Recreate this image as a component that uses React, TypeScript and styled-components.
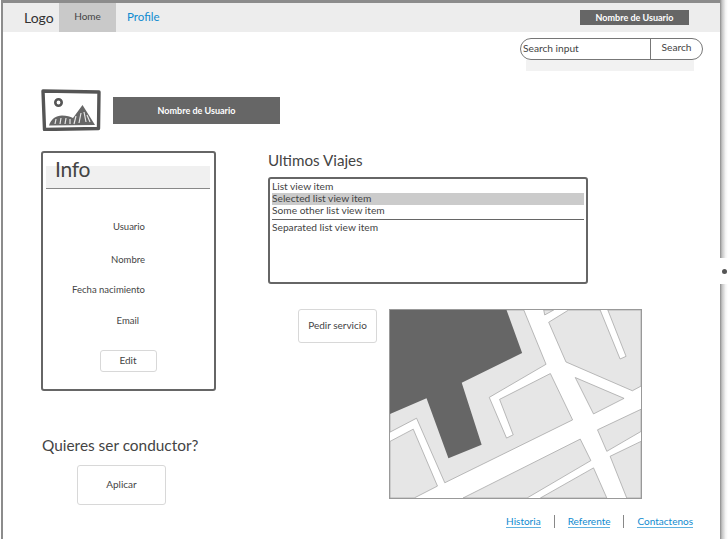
import React from "react";
import styled, { createGlobalStyle } from "styled-components";

const Global = createGlobalStyle`
  html, body { margin: 0; padding: 0; background: #fff; overflow: hidden; }
  body { font-family: "Lato", "Open Sans", sans-serif; color: #444; }
  * { box-sizing: border-box; }
`;

const Frame = styled.div`
  position: relative;
  margin-left: 1px;
  width: 719px;
  height: 539px;
  border: solid #8c8c8c;
  border-width: 3px 0 0 2px;
  &::after {
    content: "";
    position: absolute;
    top: -3px;
    bottom: 0;
    right: -8px;
    width: 8px;
    background: linear-gradient(to right, #8a8a8a 0, #c4c4c4 25%, #f4f4f4 70%, #fff 100%);
  }
`;

const Header = styled.header`
  display: flex;
  align-items: center;
  height: 29px;
  background: #ededed;
`;
const Logo = styled.div`
  width: 35px;
  margin-left: 21px;
  padding-bottom: 1px;
  font-size: 14px;
  color: #333;
`;
const HomeTab = styled.div`
  width: 57px;
  height: 29px;
  padding-bottom: 3px;
  background: #c9c9c9;
  display: flex;
  align-items: center;
  justify-content: center;
  font-size: 10px;
  color: #444;
`;
const ProfileLink = styled.a`
  margin-left: 11px;
  padding-bottom: 3px;
  font-size: 11.5px;
  color: #0f8bd0;
`;
const UserChip = styled.div`
  margin-left: auto;
  margin-right: 31px;
  width: 109px;
  height: 15px;
  padding-bottom: 1px;
  background: #666;
  color: #fff;
  font-size: 9px;
  font-weight: 700;
  display: flex;
  align-items: center;
  justify-content: center;
`;

const SearchArea = styled.div`
  display: flex;
  flex-direction: column;
  align-items: flex-end;
  margin-top: 6px;
  padding-right: 17px;
`;
const SearchBox = styled.div`
  display: flex;
  width: 183px;
  height: 22px;
  border: 1px solid #777;
  border-radius: 11px;
  font-size: 10.2px;
  color: #444;
`;
const SearchInput = styled.div`
  flex: 1;
  padding-left: 2px;
  line-height: 19px;
  border-right: 1px solid #777;
`;
const SearchButton = styled.div`
  width: 51px;
  text-align: center;
  line-height: 17px;
`;
const SearchShade = styled.div`
  width: 168px;
  height: 11px;
  margin-right: 9px;
  background: #f2f2f2;
`;

const ProfileRow = styled.section`
  display: flex;
  align-items: center;
  gap: 12px;
  margin-top: 18px;
  padding-left: 38px;
  height: 42px;
`;
const NameBar = styled.div`
  width: 167px;
  height: 27px;
  background: #666;
  color: #fff;
  font-size: 9px;
  font-weight: 700;
  display: flex;
  align-items: center;
  justify-content: center;
`;

const Main = styled.main`
  display: grid;
  grid-template-columns: 175px 1fr;
  column-gap: 52px;
  margin-top: 20px;
  padding-left: 38px;
`;
const LeftColumn = styled.div`
  display: flex;
  flex-direction: column;
`;
const RightColumn = styled.div`
  display: flex;
  flex-direction: column;
`;

const InfoPanel = styled.section`
  height: 240px;
  border: 2px solid #666;
  border-radius: 3px;
  display: flex;
  flex-direction: column;
`;
const InfoBand = styled.div`
  height: 23px;
  margin: 13px 4px 0 3px;
  background: #f0f0f0;
  border-bottom: 1px solid #888;
`;
const InfoTitle = styled.h2`
  margin: -12px 0 0 9px;
  font-size: 21px;
  line-height: 30px;
  font-weight: 400;
  letter-spacing: -0.3px;
  color: #444;
`;
const InfoFields = styled.div`
  display: grid;
  grid-template-rows: 33px 30px 31px 31px;
  margin-top: 30px;
  padding-right: 69px;
  text-align: right;
  font-size: 9.5px;
  line-height: 16px;
  color: #444;
`;
const InfoField = styled.div<{ $inset?: number }>`
  padding-right: ${(p) => p.$inset ?? 0}px;
`;
const GhostButton = styled.div<{ $w: number; $h: number }>`
  width: ${(p) => p.$w}px;
  height: ${(p) => p.$h}px;
  padding-bottom: 2px;
  border: 1px solid #d8d8d8;
  border-radius: 3px;
  display: flex;
  align-items: center;
  justify-content: center;
  font-size: 10px;
  color: #444;
  flex: none;
`;
const EditSlot = styled.div`
  display: flex;
  justify-content: center;
  margin-top: 6px;
  padding-right: 1px;
`;

const Question = styled.h3`
  margin: 45px 0 0 1px;
  font-size: 15.4px;
  line-height: 19px;
  font-weight: 400;
  white-space: nowrap;
  color: #444;
`;
const ApplySlot = styled.div`
  margin: 10px 0 0 36px;
`;

const TripsTitle = styled.h2`
  margin: 0;
  height: 26px;
  font-size: 15.2px;
  line-height: 19px;
  font-weight: 400;
  color: #444;
`;
const TripList = styled.ul`
  list-style: none;
  margin: 0;
  padding: 2px 2px 0 2px;
  width: 320px;
  height: 107px;
  border: 2px solid #666;
  border-radius: 3px;
  font-size: 10.2px;
  color: #444;
`;
const TripItem = styled.li<{ $selected?: boolean; $separated?: boolean }>`
  height: 12px;
  line-height: 10px;
  background: ${(p) => (p.$selected ? "#cbcbcb" : "transparent")};
  ${(p) => p.$separated && "margin-top: 2px; border-top: 1px solid #666; height: 16px; line-height: 14px;"}
`;
const ServiceRow = styled.div`
  display: flex;
  gap: 12px;
  margin-top: 25px;
  padding-left: 30px;
`;
const MapBox = styled.svg`
  display: block;
  flex: none;
  width: 253px;
  height: 190px;
  border: 1px solid #999;
`;

const Footer = styled.footer`
  display: flex;
  justify-content: flex-end;
  align-items: center;
  gap: 12px;
  margin-top: 9px;
  padding-right: 27px;
  height: 15px;
`;
const FooterLink = styled.a`
  font-size: 10px;
  line-height: 12px;
  color: #0f8bd0;
  border-bottom: 1px solid #5fb2e0;
`;
const FooterRule = styled.span`
  width: 1px;
  height: 13px;
  margin: 0 1px;
  background: #888;
`;

const SideTab = styled.div`
  position: absolute;
  z-index: 1;
  top: 255px;
  right: -8px;
  width: 8px;
  height: 26px;
  background: #fff;
  display: flex;
  align-items: center;
  justify-content: center;
`;
const SideDot = styled.span`
  width: 5px;
  height: 5px;
  border-radius: 50%;
  background: #555;
`;

const PhotoIcon = () => (
  <svg width="60" height="42" viewBox="0 0 60 42" fill="none" style={{ flex: "none" }}>
    <path d="M2 2 L58 3 L57.5 39.5 L3.5 40.5 Z" stroke="#555" strokeWidth="3.4" strokeLinejoin="round" />
    <circle cx="17.5" cy="13.5" r="3.2" stroke="#555" strokeWidth="2.6" />
    <path d="M8 36.5 C10 30 15 26.5 21 26.5 C26 26.5 29 27.5 32 29 L41.5 16 L54 36 Z" fill="#666" />
    <path d="M14 35 L15 30 M19 35 L20 29 M24 35 L25 29 M29 35 L29 30 M33 35 L35 27 M38 34 L40 24 M45 33 L43 23 M49 33 L46 26" stroke="#e6e6e6" strokeWidth="1.2" />
  </svg>
);

const blocks = [
  "27,28 430,28 497,192 326,292 378,415 398,405 357,298 510,220 577,360 192,550 107,355 27,397",
  "27,425 97,388 170,560 100,596 27,596",
  "505,65 565,28 660,28 720,176 738,168 683,28 783,28 783,258 757,272 557,185",
  "490,28 520,28 493,43",
  "585,232 732,295 640,342",
  "652,390 783,328 783,395 680,455",
  "690,470 783,425 783,596 740,596",
  "247,596 600,418 632,483 440,596",
  "480,596 640,505 680,596",
];

const CityMap = () => (
  <MapBox viewBox="27 28 756 568" preserveAspectRatio="none">
    <rect x="27" y="28" width="756" height="568" fill="#fff" />
    {blocks.map((points) => (
      <polygon key={points} points={points} fill="#e6e6e6" stroke="#999" strokeWidth="2" />
    ))}
    <polygon points="27,28 378,28 425,158 243,248 303,435 203,476 137,295 27,342" fill="#666" />
  </MapBox>
);

export default function App() {
  return (
    <>
      <Global />
      <Frame>
        <Header>
          <Logo>Logo</Logo>
          <HomeTab>Home</HomeTab>
          <ProfileLink>Profile</ProfileLink>
          <UserChip>Nombre de Usuario</UserChip>
        </Header>
        <SearchArea>
          <SearchBox>
            <SearchInput>Search input</SearchInput>
            <SearchButton>Search</SearchButton>
          </SearchBox>
          <SearchShade />
        </SearchArea>
        <ProfileRow>
          <PhotoIcon />
          <NameBar>Nombre de Usuario</NameBar>
        </ProfileRow>
        <Main>
          <LeftColumn>
            <InfoPanel>
              <InfoBand>
                <InfoTitle>Info</InfoTitle>
              </InfoBand>
              <InfoFields>
                <InfoField>Usuario</InfoField>
                <InfoField>Nombre</InfoField>
                <InfoField>Fecha nacimiento</InfoField>
                <InfoField $inset={6}>Email</InfoField>
              </InfoFields>
              <EditSlot>
                <GhostButton $w={57} $h={22}>Edit</GhostButton>
              </EditSlot>
            </InfoPanel>
            <Question>Quieres ser conductor?</Question>
            <ApplySlot>
              <GhostButton $w={89} $h={40}>Aplicar</GhostButton>
            </ApplySlot>
          </LeftColumn>
          <RightColumn>
            <TripsTitle>Ultimos Viajes</TripsTitle>
            <TripList>
              <TripItem>List view item</TripItem>
              <TripItem $selected>Selected list view item</TripItem>
              <TripItem>Some other list view item</TripItem>
              <TripItem $separated>Separated list view item</TripItem>
            </TripList>
            <ServiceRow>
              <GhostButton $w={79} $h={34}>Pedir servicio</GhostButton>
              <CityMap />
            </ServiceRow>
          </RightColumn>
        </Main>
        <Footer>
          <FooterLink>Historia</FooterLink>
          <FooterRule />
          <FooterLink>Referente</FooterLink>
          <FooterRule />
          <FooterLink>Contactenos</FooterLink>
        </Footer>
        <SideTab>
          <SideDot />
        </SideTab>
      </Frame>
    </>
  );
}
